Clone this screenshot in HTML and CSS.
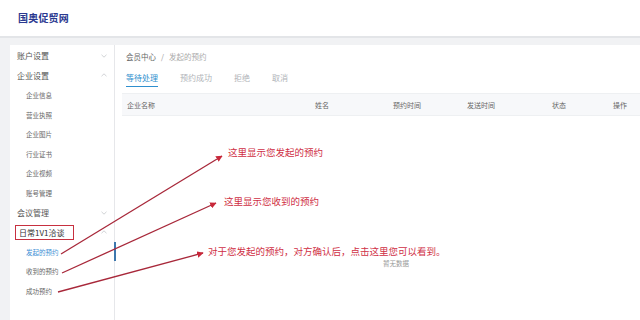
FILE: index.html
```html
<!DOCTYPE html>
<html lang="zh">
<head>
<meta charset="utf-8">
<link rel="stylesheet" href="styles.css">
</head>
<body>
<header class="topbar">
  <div class="logo">国奥促贸网</div>
</header>
<div class="page">
  <aside class="sidebar">
    <div class="item top"><span>账户设置</span><svg class="chev" viewBox="0 0 6 4"><path d="M0.5 0.8 L3 3.2 L5.5 0.8" /></svg></div>
    <div class="item top"><span>企业设置</span><svg class="chev" viewBox="0 0 6 4"><path d="M0.5 3.2 L3 0.8 L5.5 3.2" /></svg></div>
    <div class="item sub">企业信息</div>
    <div class="item sub">营业执照</div>
    <div class="item sub">企业图片</div>
    <div class="item sub">行业证书</div>
    <div class="item sub">企业视频</div>
    <div class="item sub">账号管理</div>
    <div class="item top"><span>会议管理</span><svg class="chev" viewBox="0 0 6 4"><path d="M0.5 0.8 L3 3.2 L5.5 0.8" /></svg></div>
    <div class="item top"><span class="boxed">日常1V1洽谈</span><svg class="chev" viewBox="0 0 6 4"><path d="M0.5 3.2 L3 0.8 L5.5 3.2" /></svg></div>
    <div class="item sub active">发起的预约</div>
    <div class="item sub">收到的预约</div>
    <div class="item sub">成功预约</div>
  </aside>
  <main class="main">
    <div class="crumb"><span class="crumb-home">会员中心</span><span class="sep">/</span><span class="crumb-cur">发起的预约</span></div>
    <nav class="tabs">
      <span class="tab on">等待处理</span>
      <span class="tab">预约成功</span>
      <span class="tab">拒绝</span>
      <span class="tab">取消</span>
    </nav>
    <div class="thead">
      <span>企业名称</span>
      <span>姓名</span>
      <span>预约时间</span>
      <span>发送时间</span>
      <span>状态</span>
      <span>操作</span>
    </div>
    <div class="empty">暂无数据</div>
  </main>
</div>

<svg class="arrows" viewBox="0 0 640 320" width="640" height="320">
  <defs>
    <marker id="ah" viewBox="0 0 10 10" refX="9" refY="5" markerWidth="5" markerHeight="5" orient="auto">
      <path d="M0 0 L10 5 L0 10 z" fill="#c8283a"/>
    </marker>
  </defs>
  <line x1="61" y1="254" x2="222" y2="156" stroke="#a8283a" stroke-width="1.3" marker-end="url(#ah)"/>
  <line x1="62" y1="273" x2="216" y2="203" stroke="#a8283a" stroke-width="1.3" marker-end="url(#ah)"/>
  <line x1="58" y1="292" x2="203" y2="253" stroke="#a8283a" stroke-width="1.3" marker-end="url(#ah)"/>
</svg>
<div class="note n1">这里显示您发起的预约</div>
<div class="note n2">这里显示您收到的预约</div>
<div class="note n3">对于您发起的预约，对方确认后，点击这里您可以看到。</div>
</body>
</html>
```

FILE: styles.css
```css
* { box-sizing: border-box; }
html, body { margin: 0; padding: 0; }
body {
  width: 640px;
  height: 320px;
  overflow: hidden;
  background: #f1f2f4;
  font-family: "Noto Sans CJK SC", "Noto Sans", sans-serif;
  position: relative;
}
.topbar {
  height: 38px;
  background: #fff;
  border-bottom: 2px solid #e3e5e8;
  display: flex;
  align-items: center;
  padding-left: 18px;
}
.logo {
  font-size: 10px;
  font-weight: 700;
  color: #2b3990;
  letter-spacing: 0.2px;
  margin-top: -1px;
}
.page {
  display: flex;
  padding: 7px 0 0 10px;
  height: 282px;
}
.sidebar {
  width: 105px;
  background: #fff;
  border-right: 1px solid #e6e7ea;
  padding-top: 1px;
  flex: none;
}
.item {
  height: 19.6px;
  display: flex;
  align-items: center;
  justify-content: space-between;
  position: relative;
}
.item.top {
  padding: 0 7px 0 7px;
  font-size: 8px;
  color: #555;
}
.item.sub {
  padding-left: 16px;
  font-size: 6.5px;
  color: #666;
}
.item.active { color: #3a8ed4; }
.item.active::after {
  content: "";
  position: absolute;
  right: -2px;
  top: 0;
  width: 2px;
  height: 19px;
  background: #3d77ad;
}
.chev {
  width: 6px;
  height: 4px;
  fill: none;
  stroke: #c4c6ca;
  stroke-width: 0.8;
}
.boxed {
  border: 1.5px solid #c7303f;
  padding: 1px 9px 1px 3px;
  margin-left: -2px;
  color: #333;
  font-size: 8px;
}
.main {
  flex: 1;
  background: #fff;
  padding: 4px 0 0 7px;
  display: flex;
  flex-direction: column;
}
.crumb {
  font-size: 7.5px;
  color: #666;
  padding-left: 4px;
  height: 14px;
  display: flex;
  align-items: center;
}
.sep { margin: 0 5px; color: #999; }
.crumb-cur { color: #aaa; }
.tabs {
  display: flex;
  gap: 22px;
  padding-left: 4px;
  margin-top: 9px;
  height: 17px;
}
.tab {
  font-size: 8px;
  color: #b0b3b8;
  height: 15px;
  line-height: 11px;
}
.tab.on {
  color: #2f8fce;
  border-bottom: 1.5px solid #2f8fce;
}
.thead {
  margin-top: 4px;
  background: #f7f8fa;
  border-top: 1px solid #eef0f2;
  border-bottom: 1px solid #eef0f2;
  height: 23px;
  display: grid;
  grid-template-columns: 188px 78px 74px 85px 61px 1fr;
  align-items: center;
  padding-left: 5px;
  font-size: 7px;
  color: #666;
}
.empty {
  text-align: center;
  font-size: 6.5px;
  color: #999;
  margin-top: 142px;
  padding-left: 30px;
}
.arrows {
  position: absolute;
  left: 0;
  top: 0;
  pointer-events: none;
}
.note {
  position: absolute;
  font-size: 9.5px;
  color: #cf2f45;
  white-space: nowrap;
  line-height: 12px;
}
.n1 { left: 228px; top: 146px; }
.n2 { left: 224px; top: 195px; }
.n3 { left: 208px; top: 245px; }
```
